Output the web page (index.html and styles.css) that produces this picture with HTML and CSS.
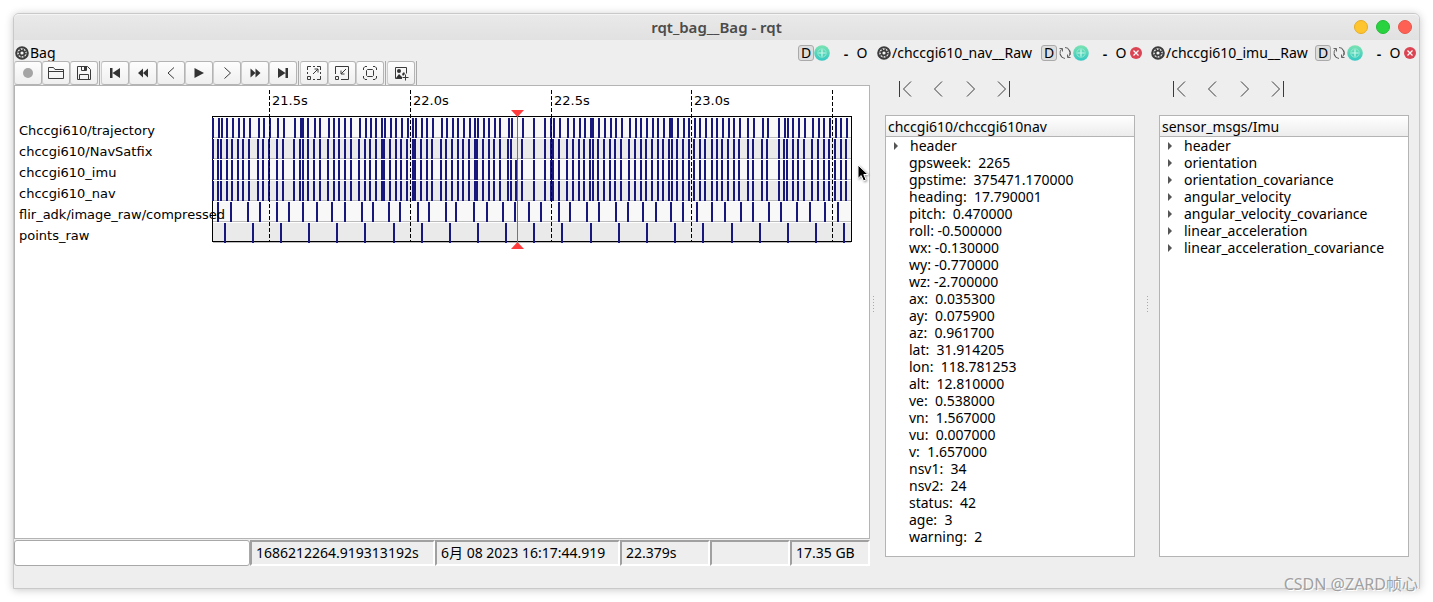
FILE: index.html
```html
<!DOCTYPE html>
<html lang="en">
<head>
<meta charset="utf-8">
<title>rqt_bag__Bag - rqt</title>
<link rel="stylesheet" href="styles.css">
</head>
<body>
<svg class="defs" aria-hidden="true">
  <defs>
    <linearGradient id="teal" x1="0" y1="0" x2="0" y2="1"><stop offset="0" stop-color="#7be3b0"/><stop offset="1" stop-color="#35c8c4"/></linearGradient>
    <symbol id="gear" viewBox="0 0 15 15">
      <circle cx="7.5" cy="7.5" r="6.200" fill="#f4f4f4" stroke="#3c3c3c" stroke-width="2.200"/>
      <circle cx="7.5" cy="7.5" r="2.600" fill="none" stroke="#3c3c3c" stroke-width="1.800"/>
      <circle cx="7.5" cy="7.5" r="4.200" fill="none" stroke="#3c3c3c" stroke-width="1.600" stroke-dasharray="1.600 1.700"/>
    </symbol>
    <symbol id="globe" viewBox="0 0 16 16">
      <circle cx="8" cy="8" r="7.8" fill="url(#teal)"/>
      <circle cx="8" cy="8" r="4.2" fill="none" stroke="#92ead0" stroke-width="1"/>
      <path d="M8 4.500v7M4.500 8h7" stroke="#c8f8ea" stroke-width="1.2"/>
    </symbol>
    <symbol id="refresh" viewBox="0 0 14 14">
      <path d="M4.500 11.300A5.300 5.300 0 0 1 3.500 3.200M1.500 2.500h3v3M7 1.500A5.500 5.500 0 0 1 12 9M9.500 2.700A5.300 5.300 0 0 1 10.500 10.800M12.500 11.500h-3v-3M7 12.500A5.500 5.500 0 0 1 2 8" fill="none" stroke="#555" stroke-width=".9"/>
    </symbol>
    <symbol id="close" viewBox="0 0 12 12">
      <circle cx="6" cy="6" r="6" fill="#da4453"/>
      <path d="M3.5 3.5l5 5M8.500 3.500l-5 5" stroke="#fff" stroke-width="1.2"/>
    </symbol>
    <symbol id="first" viewBox="0 0 14 16"><path d="M1.500 0v16M13 .5L5.500 8l7.500 7.500" fill="none" stroke="#3a3a3a"/></symbol>
    <symbol id="prev" viewBox="0 0 14 16"><path d="M11 .5L3.500 8l7.500 7.500" fill="none" stroke="#3a3a3a"/></symbol>
    <symbol id="next" viewBox="0 0 14 16"><path d="M3 .5L10.500 8 3 15.500" fill="none" stroke="#3a3a3a"/></symbol>
    <symbol id="last" viewBox="0 0 14 16"><path d="M12.500 0v16M1 .5L8.500 8 1 15.500" fill="none" stroke="#3a3a3a"/></symbol>
  </defs>
</svg>

<div class="window">
  <header class="titlebar">
    <h1>rqt_bag__Bag - rqt</h1>
    <div class="lights">
      <button class="light amber" aria-label="Minimize"></button>
      <button class="light green" aria-label="Maximize"></button>
      <button class="light red" aria-label="Close"></button>
    </div>
  </header>

  <main class="docks">
    <section class="dock bag">
      <div class="dock-title">
        <svg class="gear"><use href="#gear"/></svg><h2>Bag</h2>
        <button class="d-btn">D</button><button class="ico" aria-label="Help"><svg class="i16"><use href="#globe"/></svg></button>
        <button class="min">-</button><button class="float">O</button>
      </div>
      <div class="toolbar">
        <div class="group">
          <button class="tool" aria-label="Record" disabled><svg viewBox="0 0 16 16"><circle cx="8" cy="8" r="5" fill="#a5a5a5"/></svg></button>
          <button class="tool" aria-label="Load bag"><svg viewBox="0 0 16 16"><path d="M.5 13.500v-11h5l1.500 2h8.500v9zM.5 6.500h15" fill="none" stroke="#3a3a3a"/></svg></button>
          <button class="tool" aria-label="Save bag"><svg viewBox="0 0 16 16"><path d="M1.500 1.500h10l3 3v10h-13zM3.500 14.500v-5h9v5M5.500 1.500v4h5v-4" fill="none" stroke="#3a3a3a"/><path d="M8 2h2v3H8z" fill="#3a3a3a"/></svg></button>
        </div>
        <div class="group">
          <button class="tool" aria-label="Seek to start"><svg viewBox="0 0 16 16"><path d="M3 3h2.500v10H3zM13 3v10L5.500 8z" fill="#333"/></svg></button>
          <button class="tool" aria-label="Fast backward"><svg viewBox="0 0 16 16"><path d="M8 3.500v9L3 8zM13 3.500v9L8 8z" fill="#333"/></svg></button>
          <button class="tool" aria-label="Previous message"><svg viewBox="0 0 16 16"><path d="M11 2.500L5 8l6 5.500" fill="none" stroke="#3a3a3a"/></svg></button>
          <button class="tool" aria-label="Play"><svg viewBox="0 0 16 16"><path d="M3.500 3l9.500 5-9.500 5z" fill="#333"/></svg></button>
          <button class="tool" aria-label="Next message"><svg viewBox="0 0 16 16"><path d="M5.500 2.500l6 5.500-6 5.500" fill="none" stroke="#3a3a3a"/></svg></button>
          <button class="tool" aria-label="Fast forward"><svg viewBox="0 0 16 16"><path d="M3.500 3.500v9l5-4.500zM8.500 3.500v9l5-4.500z" fill="#333"/></svg></button>
          <button class="tool" aria-label="Seek to end"><svg viewBox="0 0 16 16"><path d="M10.500 3H13v10h-2.500zM3 3v10l7.500-5z" fill="#333"/></svg></button>
        </div>
        <div class="group">
          <button class="tool" aria-label="Zoom in"><svg viewBox="0 0 16 16"><path d="M1.500 5V1.500H5M7 1.500h2M11 1.500h3.500V5M14.500 7v2M14.500 11v3.500H11M9 14.500H7M1.500 7v2M1.500 11.500h3v3h-3zM7 9l5-5M8.500 4H12v3.500" fill="none" stroke="#3a3a3a"/></svg></button>
          <button class="tool" aria-label="Zoom out"><svg viewBox="0 0 16 16"><path d="M1.500 9V1.500h13v13H7M1.500 11.500h3v3h-3zM12 4L7 9M7 5.500V9h3.500" fill="none" stroke="#3a3a3a"/></svg></button>
          <button class="tool" aria-label="Zoom home"><svg viewBox="0 0 16 16"><path d="M1.500 5V3l1.500-1.500h2M11 1.500h2L14.500 3v2M14.500 11v2L13 14.500h-2M5 14.500H3L1.500 13v-2M5.500 4.500h5l1 1v5l-1 1h-5l-1-1v-5z" fill="none" stroke="#3a3a3a"/></svg></button>
        </div>
        <div class="group">
          <button class="tool" aria-label="Toggle thumbnails"><svg viewBox="0 0 16 16"><path d="M13.500 8.500v-6h-11v11H9M12.500 9.500v6M9.500 12.500h6" fill="none" stroke="#3a3a3a"/><circle cx="6" cy="6" r="2" fill="#333"/><path d="M3 13l3-4 3 3v1zM9 9l2-2 1 2-2 2z" fill="#333"/></svg></button>
        </div>
      </div>

      <div class="timeline">
        <ul class="topics">
          <li>Chccgi610/trajectory</li><li>chccgi610/NavSatfix</li><li>chccgi610_imu</li><li>chccgi610_nav</li><li>flir_adk/image_raw/compressed</li><li>points_raw</li>
        </ul>
        <svg class="plot" id="plot" viewBox="212 86 640 164" preserveAspectRatio="none" role="img" aria-label="Message timeline"></svg>
        <div class="ticks"><span></span><span>21.5s</span><span>22.0s</span><span>22.5s</span><span>23.0s</span></div>
        <svg class="pointer" viewBox="0 0 12 19" aria-hidden="true"><path d="M1 1v13.500l3.200-3 2.300 5.500 2.600-1.200L6.800 10.500H11z" fill="#000" stroke="#fff"/></svg>
      </div>

      <footer class="status">
        <input type="text" aria-label="Status message">
        <output class="cell wide">1686212264.919313192s</output>
        <output class="cell wide">6月 08 2023 16:17:44.919</output>
        <output class="cell mid">22.379s</output>
        <output class="cell"></output>
        <output class="cell">17.35 GB</output>
      </footer>
    </section>

    <div class="splitter"></div>

    <section class="dock raw">
      <div class="dock-title">
        <svg class="gear"><use href="#gear"/></svg><h2>/chccgi610_nav__Raw</h2>
        <button class="d-btn">D</button><button class="ico" aria-label="Reload"><svg class="i14"><use href="#refresh"/></svg></button><button class="ico" aria-label="Help"><svg class="i16"><use href="#globe"/></svg></button>
        <button class="min">-</button><button class="float">O</button><button class="ico shut" aria-label="Close panel"><svg class="i12"><use href="#close"/></svg></button>
      </div>
      <nav class="seek">
        <button aria-label="First"><svg><use href="#first"/></svg></button><button aria-label="Previous"><svg><use href="#prev"/></svg></button><button aria-label="Next"><svg><use href="#next"/></svg></button><button aria-label="Last"><svg><use href="#last"/></svg></button>
      </nav>
      <div class="tree">
        <h3>chccgi610/chccgi610nav</h3>
        <ul>
          <li class="branch">header</li><li>gpsweek:  2265</li><li>gpstime:  375471.170000</li><li>heading:  17.790001</li><li>pitch:  0.470000</li><li>roll: -0.500000</li><li>wx: -0.130000</li><li>wy: -0.770000</li><li>wz: -2.700000</li><li>ax:  0.035300</li><li>ay:  0.075900</li><li>az:  0.961700</li><li>lat:  31.914205</li><li>lon:  118.781253</li><li>alt:  12.810000</li><li>ve:  0.538000</li><li>vn:  1.567000</li><li>vu:  0.007000</li><li>v:  1.657000</li><li>nsv1:  34</li><li>nsv2:  24</li><li>status:  42</li><li>age:  3</li><li>warning:  2</li>
        </ul>
      </div>
    </section>

    <div class="splitter"></div>

    <section class="dock raw">
      <div class="dock-title">
        <svg class="gear"><use href="#gear"/></svg><h2>/chccgi610_imu__Raw</h2>
        <button class="d-btn">D</button><button class="ico" aria-label="Reload"><svg class="i14"><use href="#refresh"/></svg></button><button class="ico" aria-label="Help"><svg class="i16"><use href="#globe"/></svg></button>
        <button class="min">-</button><button class="float">O</button><button class="ico shut" aria-label="Close panel"><svg class="i12"><use href="#close"/></svg></button>
      </div>
      <nav class="seek">
        <button aria-label="First"><svg><use href="#first"/></svg></button><button aria-label="Previous"><svg><use href="#prev"/></svg></button><button aria-label="Next"><svg><use href="#next"/></svg></button><button aria-label="Last"><svg><use href="#last"/></svg></button>
      </nav>
      <div class="tree">
        <h3>sensor_msgs/Imu</h3>
        <ul>
          <li class="branch">header</li><li class="branch">orientation</li><li class="branch">orientation_covariance</li><li class="branch">angular_velocity</li><li class="branch">angular_velocity_covariance</li><li class="branch">linear_acceleration</li><li class="branch">linear_acceleration_covariance</li>
        </ul>
      </div>
    </section>
  </main>
</div>
<div class="watermark">CSDN @ZARD帧心</div>
<script src="timeline.js"></script>
</body>
</html>
```
FILE: styles.css
```css
* { box-sizing: border-box; }
body { position: relative; margin: 0; padding: 13px; height: 100vh; background: #fff; color: #000; font: 14px/17px "Noto Sans", "Noto Sans CJK SC", sans-serif; }
h1, h2, h3, ul { margin: 0; padding: 0; font: inherit; list-style: none; }
button { margin: 0; padding: 0; border: 0; background: none; color: inherit; font: inherit; }
svg { display: block; }
.defs { position: absolute; width: 0; height: 0; }

.window { display: flex; flex-direction: column; height: 100%; border: 1px solid #c9c9c9; border-radius: 6px 6px 0 0; background: #eee; box-shadow: 0 1px 8px rgba(0, 0, 0, .22); }

.titlebar { display: grid; grid-template-columns: 1fr auto 1fr; align-items: center; height: 26px; padding-bottom: 1px; background: linear-gradient(#e9e9e9, #e1e1e1); border-top: 1px solid #f5f5f5; border-radius: 5px 5px 0 0; }
.titlebar h1 { grid-column: 2; color: #4b4b4b; font-weight: 600; font-size: 15px; }
.lights { display: flex; justify-content: flex-end; gap: 8px; padding-right: 7px; }
.light { width: 14px; height: 14px; border-radius: 50%; }
.amber { background: #ffc52e; border: 1px solid #e6ad25; }
.green { background: #28d33f; border: 1px solid #22bb37; }
.red { background: #ff6054; border: 1px solid #e8564b; }

.docks { display: flex; flex: 1; min-height: 0; }
.dock { display: flex; flex-direction: column; min-width: 0; }
.bag { flex: 1; padding-bottom: 22px; }
.raw { flex: none; width: 268px; }
.raw:last-child { margin-right: 1px; }
.splitter { flex: none; width: 6px; align-self: center; height: 18px; margin-bottom: 20px; background: radial-gradient(circle, #aaa 0 1px, transparent 1px) 2px 0 / 3px 3px repeat-y; }

.dock-title { display: flex; align-items: center; height: 21px; padding: 5px 0 0 1px; white-space: pre; flex: none; }
.dock-title h2 { flex: 1; line-height: 16px; }
.gear { width: 14px; height: 14px; margin-right: 1px; flex: none; }
.bag .dock-title { padding-right: 2px; }
.raw .dock-title { padding-right: 2px; }
.d-btn { width: 16px; height: 16px; border: 1px solid #aaa; border-radius: 3px; background: #ddd; line-height: 14px; }
.ico { flex: none; }
.i16 { width: 16px; height: 16px; }
.i14 { width: 14px; height: 14px; margin: 0 1px; }
.i12 { width: 12px; height: 12px; }
.min { width: 8px; margin-left: 12px; font-weight: 600; }
.float { width: 12px; margin-left: 6px; line-height: 16px; }
.shut { margin-left: 3px; }

.toolbar { display: flex; gap: 3px; height: 24px; flex: none; }
.group { display: flex; flex: none; margin-right: -1px; padding-right: 1px; border-right: 1px solid #aaa; }
.group + .group { margin-left: -1px; }
.tool { display: grid; place-items: center; width: 28px; border: 1px solid #b4b4b4; border-left-color: #ccc; border-radius: 3px; background: linear-gradient(#fdfdfd, #efefef); }
.tool svg { width: 16px; height: 16px; }

.timeline { position: relative; display: grid; grid-template-columns: 197px minmax(0, 1fr); align-items: start; flex: 1; min-height: 0; padding-right: 17px; border: 1px solid #b4b4b4; background: #fff; font: 13px/21px "DejaVu Sans", sans-serif; }
.topics { position: relative; z-index: 1; grid-area: 1 / 1; padding: 34px 0 0 4px; white-space: nowrap; }
.plot { grid-area: 1 / 2; width: 100%; height: 164px; }
.ticks { grid-area: 1 / 2; display: grid; grid-template-columns: 57fr 141fr 141fr 140fr 161fr; padding-top: 4px; }
.ticks span { padding-left: 3px; }
.pointer { position: absolute; top: 78px; right: 0; width: 12px; height: 19px; filter: drop-shadow(1px 1px 1px rgba(0, 0, 0, .4)); }

.status { display: flex; height: 26px; margin-top: 1px; flex: none; }
.status input { flex: 1; min-width: 0; border: 1px solid #a8a8a8; border-radius: 3px; background: #fff; font: inherit; }
.cell { width: 80px; padding: 2px 0 0 4px; border: 2px solid; border-color: #a0a0a0 #fff #fff #a0a0a0; line-height: 18px; white-space: nowrap; }
.wide { width: 185px; }
.mid { width: 90px; }

.seek { display: flex; align-items: center; gap: 19px; height: 54px; padding: 2px 0 0 22px; flex: none; }
.seek svg { width: 14px; height: 16px; }
.tree { flex: 1; min-height: 0; margin: 0 9px 31px; border: 1px solid #b4b4b4; background: #fff; }
.tree h3 { height: 21px; padding: 2px 0 0 2px; border-bottom: 1px solid #b4b4b4; background: linear-gradient(#fff, #ececec); }
.tree li { padding-left: 23px; white-space: pre; }
.branch::before { content: ""; display: inline-block; width: 0; height: 0; margin: 0 12px 1px -15px; border: 4px solid transparent; border-left: 4px solid #555; border-right: 0; }

.watermark { position: absolute; right: 15px; bottom: 8px; color: #a0a0a0; font: 16px/20px "Noto Sans", "Noto Sans CJK SC", sans-serif; text-shadow: 1px 1px 0 #fff; white-space: nowrap; }
```
FILE: timeline.js
```js
const trajectory = [212,218,221,226,232,238,243,249,258,263,269,277,283,294,300,302,307,314,319,328,333,338,344,350,359,365,370,375,381,384,390,395,401,407,412,415,421,426,432,441,446,452,457,463,469,474,477,483,488,494,499,508,511,522,533,544,550,553,559,567,573,579,584,590,592,598,604,610,615,621,629,635,640,646,652,657,663,669,671,677,683,688,694,699,705,711,716,722,728,733,739,747,753,762,767,778,784,787,792,798,804,812,818,823,829,835,840,846];
const nav = [212,217,220,226,231,237,242,248,257,262,268,276,282,293,299,302,307,313,319,327,333,338,344,350,358,364,369,375,381,383,389,395,400,406,412,414,420,426,431,440,445,451,457,462,468,474,476,482,488,493,499,507,510,521,533,544,550,552,558,566,572,578,583,589,592,597,603,609,614,620,628,634,640,645,651,657,662,668,671,676,682,688,693,699,704,711,716,721,727,733,738,747,752,761,766,778,783,786,792,797,803,811,817,823,828,834,840,845];
const camera = [217,230,247,259,276,288,302,316,331,344,361,372,388,399,417,428,445,455,473,486,502,514,528,540,558,569,586,598,615,627,642,655,670,682,696,711,724,740,752,768,780,796,809,824,837];
const points = [224,252,280,308,336,364,393,421,449,477,505,533,561,590,618,646,674,702,731,759,787,815,843];
const rows = [trajectory, nav, nav.concat(515), nav.concat(515), camera, points];

let out = '';
rows.forEach((times, i) => {
  const top = 117 + 21 * i;
  out += `<rect x="213" y="${top + 1}" width="638" height="19" fill="${i % 2 ? '#eaeaea' : '#f8f8f8'}"/>`;
  out += `<rect x="213" y="${top + 20}" width="638" height="1" fill="#bbb"/>`;
});
out += '<rect x="212.5" y="116.5" width="639" height="125" fill="none" stroke="#000"/>';
rows.forEach((times, i) => {
  const d = times.map(x => `M${x + 1} ${118 + 21 * i}v20`).join('');
  out += `<path d="${d}" stroke="#17177c" stroke-width="2"/>`;
});
[269, 410, 551, 691, 832].forEach(x => {
  out += `<path d="M${x + .5} 90V241" stroke="#000" stroke-dasharray="4 2"/>`;
});
out += '<path d="M517.5 112V246" stroke="#ff3b3b"/><path d="M511 110h13l-6.500 7zM511 249h13l-6.500-7z" fill="#ff3b3b"/>';
document.getElementById('plot').innerHTML = out;
```
